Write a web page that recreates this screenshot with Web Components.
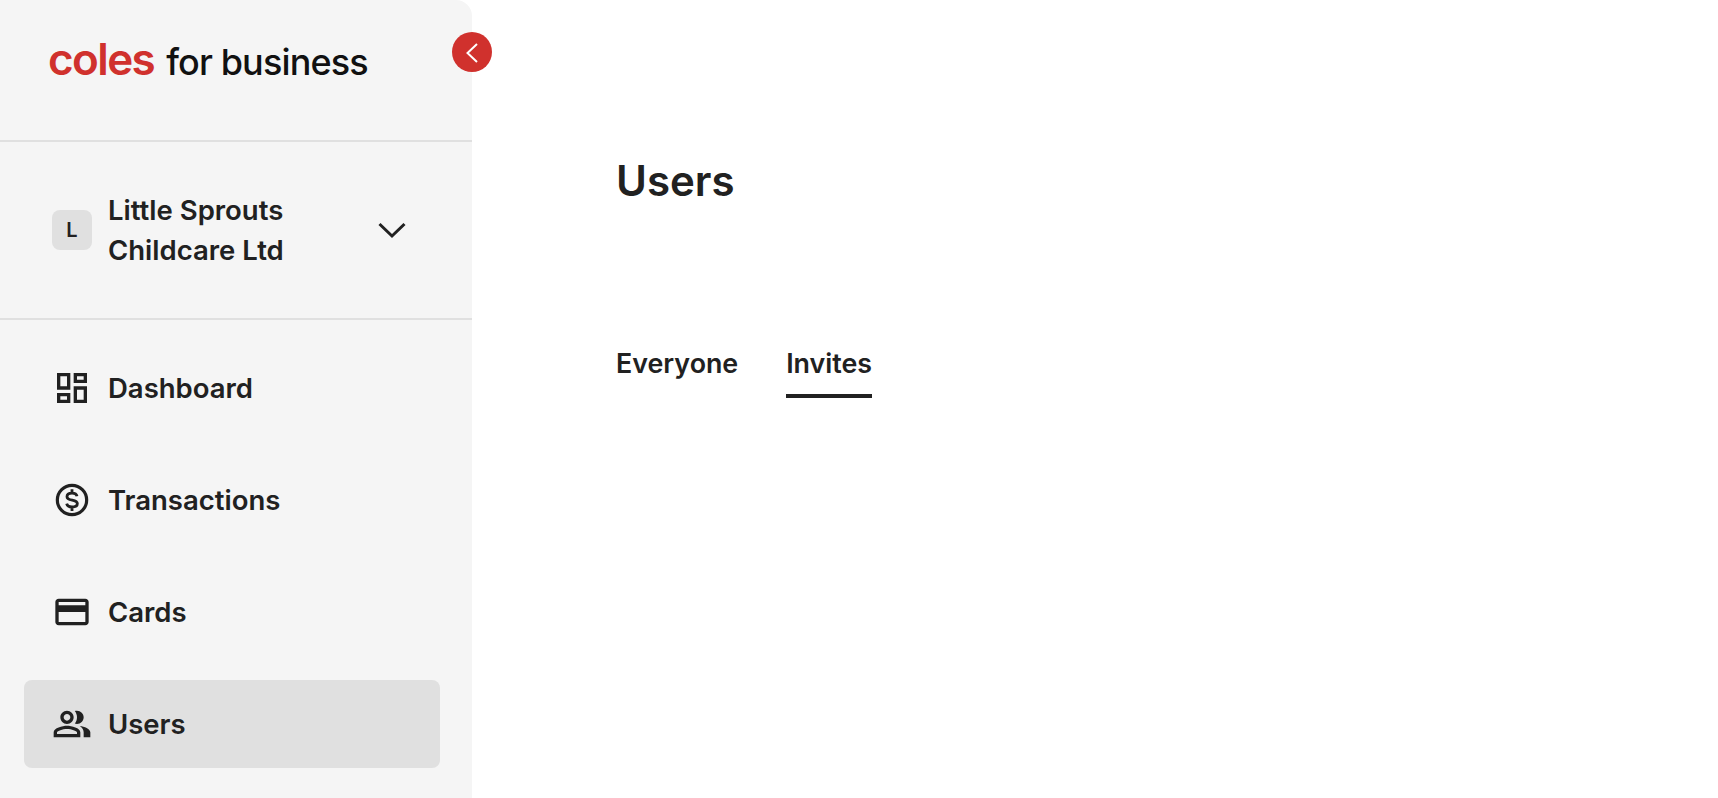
<!DOCTYPE html>
<html lang="en">
<head>
<meta charset="utf-8">
<title>Users</title>
<style>
    html, body { margin: 0; height: 100%; background: #fff; }
    body { font-family: Inter, "Liberation Sans", sans-serif; color: #212121; overflow: hidden; }
</style>
</head>
<body>
<app-shell>
    <app-sidebar slot="sidebar">
        <org-switcher slot="org" initial="L">Little Sprouts<br>Childcare Ltd</org-switcher>
        <nav-item icon="dashboard">Dashboard</nav-item>
        <nav-item icon="transactions">Transactions</nav-item>
        <nav-item icon="cards">Cards</nav-item>
        <nav-item icon="users" active>Users</nav-item>
    </app-sidebar>
    <users-page></users-page>
</app-shell>

<script>
"use strict";

// Icon paths, all on a 24 unit grid
const ICONS = {
    dashboard: '<path fill="currentColor" d="M19 5v2h-4V5h4M9 5v6H5V5h4m10 8v6h-4v-6h4M9 17v2H5v-2h4M21 3h-8v6h8V3zM11 3H3v10h8V3zm10 8h-8v10h8V11zm-10 4H3v6h8v-6z"/>',
    transactions: '<circle cx="12" cy="12" r="8.8" fill="none" stroke="currentColor" stroke-width="1.9"/><path fill="none" stroke="currentColor" stroke-width="1.7" d="M15 9.800c-.2-1.100-1.300-1.900-3-1.900-1.700 0-3 .8-3 2.100 0 2.900 6.200 1.300 6.200 4.100 0 1.300-1.400 2.100-3.200 2.100-1.700 0-2.900-.8-3.200-2M12 5.500v2.400M12 16.200v2.400"/>',
    cards: '<path fill="currentColor" d="M20 4H4c-1.110 0-1.990.89-1.990 2L2 18c0 1.110.89 2 2 2h16c1.110 0 2-.89 2-2V6c0-1.110-.89-2-2-2zm0 14H4v-6h16v6zm0-10H4V6h16v2z"/>',
    users: '<path fill="currentColor" d="M16.670 13.130C18.040 14.060 19 15.320 19 17v3h4v-3c0-2.180-3.570-3.470-6.330-3.870z"/><path fill="currentColor" d="M15 12c2.210 0 4-1.790 4-4s-1.790-4-4-4c-.47 0-.91.1-1.330.24C14.500 5.270 15 6.580 15 8s-.5 2.730-1.330 3.760c.42.14.86.24 1.330.24z"/><path fill="currentColor" d="M9 12c2.210 0 4-1.790 4-4s-1.790-4-4-4-4 1.790-4 4 1.790 4 4 4zm0-6c1.100 0 2 .9 2 2s-.9 2-2 2-2-.9-2-2 .9-2 2-2z"/><path fill="currentColor" d="M9 13c-2.670 0-8 1.340-8 4v3h16v-3c0-2.660-5.330-4-8-4zm6 5H3v-.99C3.200 16.290 6.300 15 9 15s5.800 1.290 6 2z"/>'
};

class AppShell extends HTMLElement {
    constructor() {
        super();
        this.attachShadow({ mode: 'open' });
    }

    connectedCallback() {
        this.shadowRoot.innerHTML = `
            <style>
                :host { display: flex; height: 798px; width: 100%; }
            </style>
            <slot name="sidebar"></slot>
            <slot></slot>
        `;
    }
}

class AppSidebar extends HTMLElement {
    constructor() {
        super();
        this.attachShadow({ mode: 'open' });
    }

    connectedCallback() {
        this.shadowRoot.innerHTML = `
            <style>
                :host {
                    display: flex;
                    flex-direction: column;
                    flex: 0 0 472px;
                    position: relative;
                    background: #f5f5f5;
                    border-top-right-radius: 16px;
                }
                .logo {
                    flex: none;
                    box-sizing: border-box;
                    height: 142px;
                    padding: 35px 0 0 48px;
                    border-bottom: 2px solid #e0e0e0;
                    line-height: 48px;
                    white-space: nowrap;
                }
                .coles { color: #d0312d; font-size: 44px; font-weight: 600; letter-spacing: -1.6px; }
                .biz { color: #111; font-size: 36px; font-weight: 500; margin-left: 12px; letter-spacing: -.85px; }
                .collapse {
                    position: absolute;
                    top: 32px;
                    left: 452px;
                    width: 40px;
                    height: 40px;
                    border-radius: 50%;
                    background: #d0312d;
                    display: flex;
                    align-items: center;
                    justify-content: center;
                }
                nav {
                    display: flex;
                    flex-direction: column;
                    gap: 24px;
                    padding: 24px 32px 0 24px;
                }
            </style>
            <div class="logo"><span class="coles">coles</span><span class="biz">for business</span></div>
            <div class="collapse">
                <svg width="24" height="24" viewBox="0 0 24 24"><path d="M17 4 7.500 13l9.500 9" fill="none" stroke="#fff" stroke-width="2"/></svg>
            </div>
            <slot name="org"></slot>
            <nav><slot></slot></nav>
        `;
    }
}

class OrgSwitcher extends HTMLElement {
    constructor() {
        super();
        this.attachShadow({ mode: 'open' });
    }

    connectedCallback() {
        this.shadowRoot.innerHTML = `
            <style>
                :host {
                    display: flex;
                    flex: none;
                    align-items: center;
                    height: 178px;
                    box-sizing: border-box;
                    padding: 0 64px 0 52px;
                    border-bottom: 2px solid #e0e0e0;
                }
                .avatar {
                    flex: none;
                    width: 40px;
                    height: 40px;
                    border-radius: 8px;
                    background: #e0e0e0;
                    display: flex;
                    align-items: center;
                    justify-content: center;
                    font-size: 20px;
                    font-weight: 600;
                }
                .name {
                    flex: 1;
                    margin-left: 16px;
                    font-size: 27.500px;
                    line-height: 40px;
                    font-weight: 600;
                }
            </style>
            <div class="avatar">${this.getAttribute('initial')}</div>
            <div class="name"><slot></slot></div>
            <svg width="32" height="32" viewBox="0 0 32 32"><path d="M3.500 10 16 22 28.500 10" fill="none" stroke="#212121" stroke-width="3"/></svg>
        `;
    }
}

class NavItem extends HTMLElement {
    constructor() {
        super();
        this.attachShadow({ mode: 'open' });
    }

    connectedCallback() {
        this.shadowRoot.innerHTML = `
            <style>
                :host {
                    display: flex;
                    flex: none;
                    align-items: center;
                    height: 88px;
                    padding-left: 28px;
                    border-radius: 8px;
                    font-size: 27.500px;
                    font-weight: 600;
                }
                :host([active]) { background: #e0e0e0; }
                svg { flex: none; margin-right: 16px; }
            </style>
            <svg width="40" height="40" viewBox="0 0 24 24">${ICONS[this.getAttribute('icon')]}</svg>
            <span><slot></slot></span>
        `;
    }
}

class TabBar extends HTMLElement {
    constructor() {
        super();
        this.attachShadow({ mode: 'open' });
    }

    connectedCallback() {
        this.shadowRoot.innerHTML = `
            <style>
                :host { display: flex; gap: 48px; font-size: 26.800px; font-weight: 600; }
                div { height: 51px; line-height: 40px; }
                .active { border-bottom: 4px solid #212121; }
            </style>
            <div>Everyone</div>
            <div class="active">Invites</div>
        `;
    }
}

class UsersPage extends HTMLElement {
    constructor() {
        super();
        this.attachShadow({ mode: 'open' });
    }

    connectedCallback() {
        this.shadowRoot.innerHTML = `
            <style>
                :host { display: block; flex: 1; padding: 151px 0 0 144px; }
                h1 { margin: 0 0 132px; font-size: 42px; line-height: 60px; font-weight: 600; }
            </style>
            <h1>Users</h1>
            <tab-bar></tab-bar>
        `;
    }
}

customElements.define('tab-bar', TabBar);
customElements.define('users-page', UsersPage);
customElements.define('nav-item', NavItem);
customElements.define('org-switcher', OrgSwitcher);
customElements.define('app-sidebar', AppSidebar);
customElements.define('app-shell', AppShell);
</script>
</body>
</html>
